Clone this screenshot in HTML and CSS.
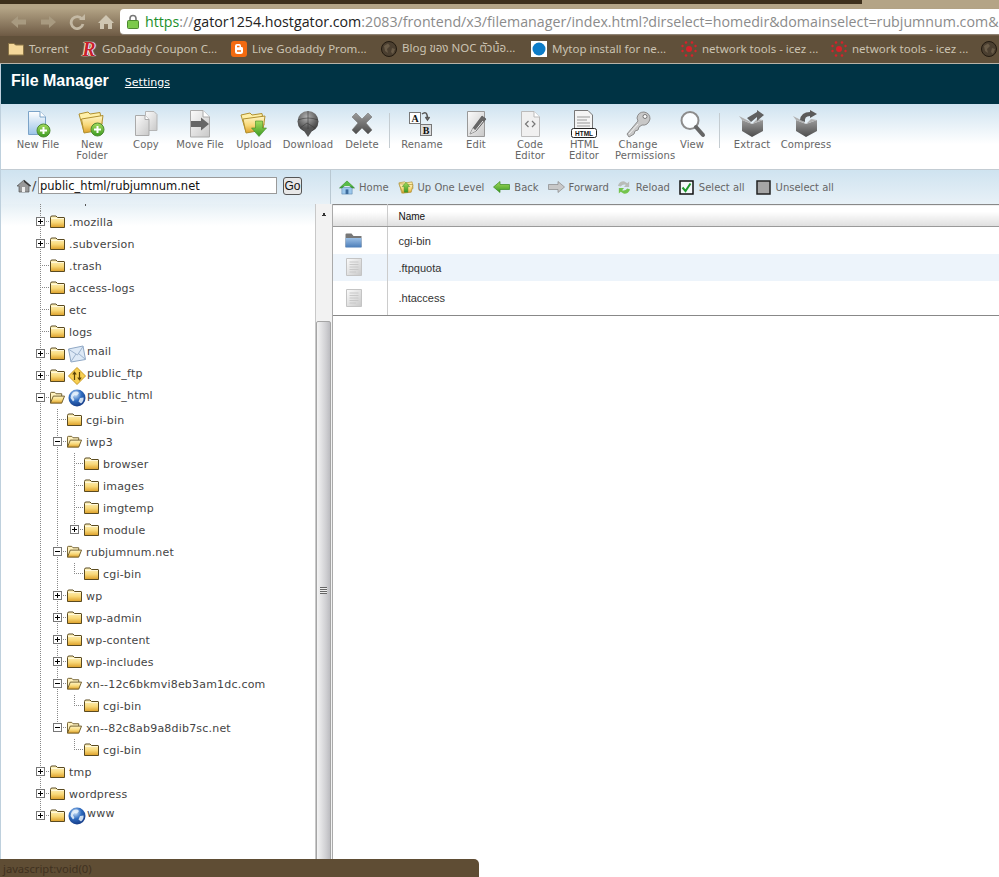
FILE: index.html
```html
<!DOCTYPE html>
<html lang="en">
<head>
<meta charset="utf-8">
<title>File Manager</title>
<link rel="stylesheet" href="styles.css">
</head>
<body>
<svg class="defs" aria-hidden="true">
  <defs>
    <linearGradient id="gFolder" x1="0" y1="0" x2="0" y2="1"><stop offset="0" stop-color="#fff6c8"/><stop offset=".55" stop-color="#f8d878"/><stop offset="1" stop-color="#dc9f28"/></linearGradient>
    <linearGradient id="gPage" x1="0" y1="0" x2="1" y2="1"><stop offset="0" stop-color="#fbfbfb"/><stop offset="1" stop-color="#c8c8c8"/></linearGradient>
    <linearGradient id="gBluePage" x1="0" y1="0" x2="0" y2="1"><stop offset="0" stop-color="#ffffff"/><stop offset="1" stop-color="#9cc4e8"/></linearGradient>
    <linearGradient id="gGray" x1="0" y1="0" x2="0" y2="1"><stop offset="0" stop-color="#9a9a9a"/><stop offset="1" stop-color="#4c4c4c"/></linearGradient>
    <linearGradient id="gGreen" x1="0" y1="0" x2="0" y2="1"><stop offset="0" stop-color="#a6dc5c"/><stop offset="1" stop-color="#3a9a22"/></linearGradient>
    <radialGradient id="gGlobe" cx=".4" cy=".3" r=".8"><stop offset="0" stop-color="#cfe6fb"/><stop offset=".45" stop-color="#2f6cc0"/><stop offset="1" stop-color="#0e2f78"/></radialGradient>
    <radialGradient id="gSphere" cx=".45" cy=".3" r=".8"><stop offset="0" stop-color="#b4b4b4"/><stop offset=".6" stop-color="#5c5c5c"/><stop offset="1" stop-color="#2e2e2e"/></radialGradient>
    <linearGradient id="gBlueFolder" x1="0" y1="0" x2="0" y2="1"><stop offset="0" stop-color="#9cc0e6"/><stop offset="1" stop-color="#4a7cb8"/></linearGradient>

    <symbol id="i-folder" viewBox="0 0 15 13"><path d="M.5 2.500Q.5 1 2 1H6L7.500 2.500H14Q14.500 2.500 14.500 3V12.500H.5Z" fill="url(#gFolder)" stroke="#5a4a20"/><path d="M1 3.500H14" stroke="#fff8d8"/></symbol>
    <symbol id="i-open" viewBox="0 0 16 13"><path d="M.5 12.500V2Q.5 1 1.500 1H5L6.500 2.500H12.500V5" fill="#fff2c0" stroke="#6a5826"/><path d="M.5 12.500L3.500 5H15.500L12.500 12.500Z" fill="url(#gFolder)" stroke="#6a5826"/></symbol>
    <symbol id="i-plus" viewBox="0 0 9 9"><rect x=".5" y=".5" width="8" height="8" fill="#fff" stroke="#777"/><path d="M2 4.500H7M4.500 2V7" stroke="#000"/></symbol>
    <symbol id="i-minus" viewBox="0 0 9 9"><rect x=".5" y=".5" width="8" height="8" fill="#fff" stroke="#777"/><path d="M2 4.500H7" stroke="#000"/></symbol>
    <symbol id="i-globe" viewBox="0 0 18 18"><circle cx="9" cy="9" r="8.500" fill="url(#gGlobe)"/><path d="M5 3.500Q9 1.500 11 4L9 6.500L6.500 6L5 8L6.500 11L5 12.500L2.500 9Q2.500 6 5 3.500ZM12 9L15.500 8.500Q16 12 13 14.500L10.500 12.500Z" fill="#eaf3fc" opacity=".85"/></symbol>
    <symbol id="i-mail" viewBox="0 0 18 17"><path d="M.5 3.500L15 .5L17.500 14L3 16.500Z" fill="#dde9f6" stroke="#8fa7c4"/><path d="M1 4L9.500 9.500L15 1M3 16L8 8.500M17 13.500L10.500 8" fill="none" stroke="#9db3cd"/></symbol>
    <symbol id="i-ftp" viewBox="0 0 18 18"><path d="M9 .5L17.500 9L9 17.500L.5 9Z" fill="#f8cf52" stroke="#c99a20"/><path d="M6.500 13V5.500M4.800 7.500L6.500 5.300L8.200 7.500M11.500 5V12.500M9.800 10.500L11.500 12.700L13.200 10.500" fill="none" stroke="#5a4308" stroke-width="1.200"/></symbol>

    <symbol id="t-newfile" viewBox="0 0 28 28"><path d="M4.500 1.500H16L21.500 7V24.500H4.500Z" fill="url(#gBluePage)" stroke="#7ba3c8"/><path d="M16 1.500V7H21.500" fill="#fff" stroke="#7ba3c8"/><circle cx="19.500" cy="20.500" r="6.500" fill="url(#gGreen)" stroke="#4c8a30"/><path d="M16 20.500H23M19.500 17V24" stroke="#fff" stroke-width="2"/></symbol>
    <symbol id="t-newfolder" viewBox="0 0 28 28"><path d="M1 4L10 2L12 4L22 2.500L24 14L6 22Z" fill="#fff0a8" stroke="#b09030"/><path d="M3.500 9L25 5.500L23 20L6 23Z" fill="url(#gFolder)" stroke="#b09030"/><circle cx="19.500" cy="19.500" r="6.500" fill="url(#gGreen)" stroke="#4c8a30"/><path d="M16 19.500H23M19.500 16V23" stroke="#fff" stroke-width="2"/></symbol>
    <symbol id="t-copy" viewBox="0 0 28 28"><path d="M13.500 1.500H22L25 4.500V20.500H13.500Z" fill="url(#gPage)" stroke="#b5b5b5"/><path d="M3.500 5.500H13L17 9.500V25.500H3.500Z" fill="url(#gPage)" stroke="#aaa"/><path d="M13 5.500V9.500H17" fill="#fff" stroke="#aaa"/></symbol>
    <symbol id="t-move" viewBox="0 0 28 28"><path d="M4.500 .5H17L23.500 7V27H4.500Z" fill="url(#gPage)" stroke="#aaa"/><path d="M17 .5V7H23.500" fill="#fff" stroke="#aaa"/><path d="M5 11H15V7.500L23 14L15 20.500V17H5Z" fill="#666"/></symbol>
    <symbol id="t-upload" viewBox="0 0 28 28"><path d="M1 5L10 3L12 5L22 3.500L24 15L6 22Z" fill="#fff0a8" stroke="#b09030"/><path d="M3 9L25 6L23 20L6 23Z" fill="url(#gFolder)" stroke="#b09030"/><path d="M15.500 11H22.500V18H26.500L19 26.500L11.500 18H15.500Z" fill="url(#gGreen)" stroke="#3c8a26" stroke-width=".6"/></symbol>
    <symbol id="t-download" viewBox="0 0 28 28"><circle cx="14" cy="11.500" r="10.500" fill="url(#gSphere)"/><path d="M8 18H20L14 27Z" fill="#555"/><path d="M4 10Q14 6 24 10M14 1V19M6 18L13 13L21 18" fill="none" stroke="#3a3a3a" opacity=".6"/></symbol>
    <symbol id="t-delete" viewBox="0 0 28 28"><path d="M4 7L8 3L14 9L20 3L24 7L18 13L24 20L20 24L14 18L8 24L4 20L10 13Z" fill="url(#gGray)" stroke="#777" stroke-width=".6"/></symbol>
    <symbol id="t-rename" viewBox="0 0 28 28"><rect x="1.500" y="2.500" width="11" height="11" fill="#fff" stroke="#777"/><text x="7" y="11.500" class="svg-serif">A</text><rect x="12.500" y="14.500" width="11" height="11" fill="#ddd" stroke="#777"/><text x="18" y="23.500" class="svg-serif">B</text><path d="M14 4Q19 0 19.500 8M17.500 7L19.500 10L21.500 7" fill="none" stroke="#555" stroke-width="1.500"/></symbol>
    <symbol id="t-edit" viewBox="0 0 28 28"><path d="M5.500 1.500H22.500V26.500H5.500Z" fill="url(#gPage)" stroke="#999"/><path d="M8 24L11 18L20 6L24 9L14 21Z" fill="#666" stroke="#444" stroke-width=".6"/><path d="M8 24L11 18L14 21Z" fill="#ddd"/><path d="M13 21L21 11" stroke="#eee"/></symbol>
    <symbol id="t-code" viewBox="0 0 28 28"><path d="M5.500 1.500H18L23.500 7V26.500H5.500Z" fill="#f0f0f0" stroke="#bbb"/><path d="M18 1.500V7H23.500" fill="#fff" stroke="#bbb"/><path d="M12.500 11L9.500 14L12.500 17M16 11L19 14L16 17" fill="none" stroke="#777" stroke-width="1.200"/></symbol>
    <symbol id="t-html" viewBox="0 0 28 28"><path d="M4.500 .5H18L22.500 5V20H4.500Z" fill="#f4f4f4" stroke="#777"/><path d="M7 7H20M7 10H17M7 13H20M7 16H20" stroke="#999"/><rect x="1.500" y="18.500" width="25" height="9" rx="2" fill="#fff" stroke="#222"/><text x="14" y="25.800" class="svg-html">HTML</text></symbol>
    <symbol id="t-key" viewBox="0 0 28 28"><path d="M3 24L5 27L10 24L11 21L14 20L15 17L18 15Q24 16 26 9Q26 3 20 2Q14 2 13 8L14 11Z" fill="#c8c8c8" stroke="#8c8c8c"/><circle cx="21" cy="6.500" r="2" fill="#fff" stroke="#777"/><path d="M5 24L14 14" stroke="#f0f0f0"/></symbol>
    <symbol id="t-view" viewBox="0 0 28 28"><circle cx="12" cy="10.500" r="8.500" fill="#fafdff" stroke="#8c8c8c" stroke-width="2"/><path d="M18 17L25 25" stroke="#666" stroke-width="4" stroke-linecap="round"/></symbol>
    <symbol id="t-extract" viewBox="0 0 28 28"><path d="M4 10L14 14L25 10V21L14 27L4 21Z" fill="url(#gGray)"/><path d="M1 6L11 11L14 14L4 10ZM25 10L14 14L19 9Z" fill="#b0b0b0"/><path d="M9 8L19 2V0L26 5L19 11V7L13 12Z" fill="#606060"/></symbol>
    <symbol id="t-compress" viewBox="0 0 28 28"><path d="M4 10L14 14L25 10V21L14 27L4 21Z" fill="url(#gGray)"/><path d="M1 6L11 11L14 14L4 10ZM25 10L14 14L19 9Z" fill="#b0b0b0"/><path d="M8 10Q9 2 18 2V0L25 4L18 8V6Q12 6 13 12Z" fill="#5a5a5a"/></symbol>

    <symbol id="n-home" viewBox="0 0 17 16"><path d="M3 8H14V15H3Z" fill="#9cc8ec" stroke="#5c86ae" stroke-width=".6"/><rect x="7" y="10" width="3" height="5" fill="#3d6c9c"/><path d="M.5 8.500L8.500 1L16.500 8.500L14 8.500L8.500 4L3 8.500Z" fill="#43a83a" stroke="#2f7c2a" stroke-width=".6"/><path d="M8.500 1L14.500 6.500L3 6.500Z" fill="#59bb48"/></symbol>
    <symbol id="n-up" viewBox="0 0 17 16"><path d="M1 3L7 2L8.500 3L15 2L16 9L4 14Z" fill="#fff0a8" stroke="#b09030" stroke-width=".7"/><path d="M1 4L5 14L14 13L16 5Z" fill="url(#gFolder)" stroke="#a88a2c" stroke-width=".7"/><path d="M8.500 2.500L12.500 7H10.500V13H6.500V7H4.500Z" fill="url(#gGreen)" stroke="#3c8a26" stroke-width=".5"/></symbol>
    <symbol id="n-back" viewBox="0 0 17 12"><path d="M.5 6L7 .5V3.500H16.500V8.500H7V11.500Z" fill="url(#gGreen)" stroke="#3a8a20" stroke-width=".7"/></symbol>
    <symbol id="n-fwd" viewBox="0 0 17 12"><path d="M16.500 6L10 .5V3.500H.5V8.500H10V11.500Z" fill="#c8c8c8" stroke="#888" stroke-width=".7"/></symbol>
    <symbol id="n-reload" viewBox="0 0 17 16"><path d="M2 6Q4 1 9 1.500L12 3.500L14 1.500V7.500H8.500L10.500 5Q7 4 5 7Z" fill="#b8bcb8"/><path d="M15 10Q13 15 8 14.500L5 12.500L3 14.500V8.500H8.500L6.500 11Q10 12 12 9Z" fill="#74c44c"/></symbol>
    <symbol id="n-check" viewBox="0 0 15 15"><rect x="1" y="1" width="13" height="13" fill="#f4f8fb" stroke="#111" stroke-width="1.500"/><path d="M3.500 7.500L6.500 11L11.500 3.500" fill="none" stroke="#1f9a2c" stroke-width="2"/></symbol>
    <symbol id="n-uncheck" viewBox="0 0 15 15"><rect x="1" y="1" width="13" height="13" fill="#a5a5a5" stroke="#222" stroke-width="1.500"/></symbol>

    <symbol id="b-folder" viewBox="0 0 16 14"><path d="M.5 13V1.500H6L7.500 3H15.500V13Z" fill="#f4d79a" stroke="#8a7446"/></symbol>
    <symbol id="b-globe" viewBox="0 0 16 16"><circle cx="8" cy="8" r="7.500" fill="#4b3f30" stroke="#221a10"/><path d="M3 5L7 2.500L9 5L6 8L7 12L4 10ZM11 7L14 8L12 13L10 11Z" fill="#6a5c48"/></symbol>
    <symbol id="b-blogger" viewBox="0 0 16 16"><rect width="16" height="16" rx="3" fill="#f26a10"/><path d="M4 5Q4 3 6 3H8.500Q10 3 10 5V6H11Q12 6 12 7.500V10.500Q12 13 9.500 13H6.500Q4 13 4 10.500Z" fill="#fff"/><path d="M6 5.500H8.500M6 10H10" stroke="#f26a10" stroke-width="1.300"/></symbol>
    <symbol id="b-blue" viewBox="0 0 16 16"><rect width="16" height="16" fill="#fff"/><circle cx="8" cy="8" r="6.500" fill="#0c7cc8"/></symbol>
    <symbol id="b-star" viewBox="0 0 16 16"><g fill="#d8202a"><circle cx="8" cy="8" r="3"/><circle cx="5" cy="1.500" r="1.300"/><circle cx="11" cy="1.500" r="1.300"/><circle cx="1.500" cy="5" r="1.200"/><circle cx="14.500" cy="5" r="1.200"/><circle cx="1.500" cy="10" r="1.200"/><circle cx="14.500" cy="10" r="1.200"/><circle cx="5" cy="14.500" r="1.300"/><circle cx="11" cy="14.500" r="1.300"/></g></symbol>
  </defs>
</svg>

<header class="browser">
  <div class="tabstrip"></div>
  <div class="omnirow">
    <nav class="browser-nav">
      <svg class="bn" viewBox="0 0 18 16"><path d="M1 8L8 2V5.500H16V10.500H8V14Z" fill="#a89a80"/></svg>
      <svg class="bn" viewBox="0 0 18 16"><path d="M17 8L10 2V5.500H2V10.500H10V14Z" fill="#a89a80"/></svg>
      <svg class="bn" viewBox="0 0 18 16"><path d="M14 5A6 6 0 1 0 15 10" fill="none" stroke="#c4b9a4" stroke-width="2.800"/><path d="M11 6H17V0Z" fill="#c4b9a4"/></svg>
      <svg class="bn" viewBox="0 0 18 16"><path d="M1 9L9 1L17 9H15V15H11V10H7V15H3V9Z" fill="#cfc6b2"/></svg>
    </nav>
    <div class="omnibox">
      <svg class="lock" viewBox="0 0 12 15"><path d="M3 7V4.500Q3 1.500 6 1.500T9 4.500V7" fill="none" stroke="#777" stroke-width="1.600"/><rect x=".5" y="6.500" width="11" height="8" rx="1" fill="#7cc94c" stroke="#4c8a30"/></svg>
      <span class="url"><span class="url-https">https</span><span class="url-rest">://</span><span class="url-host">gator1254.hostgator.com</span><span class="url-rest">:2083/frontend/x3/filemanager/index.html?dirselect=homedir&amp;domainselect=rubjumnum.com&amp;</span></span>
    </div>
  </div>
  <div class="bookmarks">
    <a class="bm bm-first"><svg class="bm-icon"><use href="#b-folder"/></svg>Torrent</a>
    <a class="bm"><span class="bm-r">R</span>GoDaddy Coupon C...</a>
    <a class="bm"><svg class="bm-icon"><use href="#b-blogger"/></svg>Live Godaddy Prom...</a>
    <a class="bm"><svg class="bm-icon"><use href="#b-globe"/></svg>Blog ของ NOC ตัวน้อ...</a>
    <a class="bm"><svg class="bm-icon"><use href="#b-blue"/></svg>Mytop install for ne...</a>
    <a class="bm"><svg class="bm-icon"><use href="#b-star"/></svg>network tools - icez ...</a>
    <a class="bm"><svg class="bm-icon"><use href="#b-star"/></svg>network tools - icez ...</a>
    <a class="bm"><svg class="bm-icon"><use href="#b-globe"/></svg></a>
  </div>
</header>

<div class="app">
  <div class="titlebar"><h1>File Manager</h1><a class="settings">Settings</a></div>

  <div class="toolbar">
    <a class="tool"><svg><use href="#t-newfile"/></svg><span>New File</span></a>
    <a class="tool"><svg><use href="#t-newfolder"/></svg><span>New Folder</span></a>
    <a class="tool"><svg><use href="#t-copy"/></svg><span>Copy</span></a>
    <a class="tool"><svg><use href="#t-move"/></svg><span>Move File</span></a>
    <a class="tool"><svg><use href="#t-upload"/></svg><span>Upload</span></a>
    <a class="tool"><svg><use href="#t-download"/></svg><span>Download</span></a>
    <a class="tool"><svg><use href="#t-delete"/></svg><span>Delete</span></a>
    <i class="tool-sep"></i>
    <a class="tool"><svg><use href="#t-rename"/></svg><span>Rename</span></a>
    <a class="tool"><svg><use href="#t-edit"/></svg><span>Edit</span></a>
    <a class="tool"><svg><use href="#t-code"/></svg><span>Code Editor</span></a>
    <a class="tool"><svg><use href="#t-html"/></svg><span>HTML Editor</span></a>
    <a class="tool tool-wide"><svg><use href="#t-key"/></svg><span>Change Permissions</span></a>
    <a class="tool"><svg><use href="#t-view"/></svg><span>View</span></a>
    <i class="tool-sep"></i>
    <a class="tool"><svg><use href="#t-extract"/></svg><span>Extract</span></a>
    <a class="tool"><svg><use href="#t-compress"/></svg><span>Compress</span></a>
  </div>

  <div class="addrbar">
    <div class="pathbox">
      <svg class="path-home" viewBox="0 0 16 14"><path d="M1 7L8 1L15 7L13 7V13H3V7Z" fill="#999" stroke="#555" stroke-width=".7"/><path d="M8 1L15 7H13L8 3Z" fill="#333"/><rect x="6" y="8" width="3" height="5" fill="#eee"/></svg>
      <span class="slash">/</span>
      <input class="path-input" type="text" value="public_html/rubjumnum.net">
      <button class="go">Go</button>
    </div>
    <nav class="navbtns">
      <a class="nav"><svg class="nv16"><use href="#n-home"/></svg>Home</a>
      <a class="nav"><svg class="nv16"><use href="#n-up"/></svg>Up One Level</a>
      <a class="nav"><svg class="nv-arrow"><use href="#n-back"/></svg>Back</a>
      <a class="nav nav-fwd"><svg class="nv-arrow"><use href="#n-fwd"/></svg>Forward</a>
      <a class="nav"><svg class="nv16"><use href="#n-reload"/></svg>Reload</a>
      <a class="nav nav-sel"><svg class="nv-check"><use href="#n-check"/></svg>Select all</a>
      <a class="nav"><svg class="nv-check"><use href="#n-uncheck"/></svg>Unselect all</a>
    </nav>
  </div>

  <main class="panes">
    <section class="tree">
      <div class="row-stub"><i class="c c-line"></i></div>
      <div class="row"><i class="c c-tee"><svg class="box"><use href="#i-plus"/></svg></i><svg class="fd"><use href="#i-folder"/></svg><span>.mozilla</span></div>
      <div class="row"><i class="c c-tee"><svg class="box"><use href="#i-plus"/></svg></i><svg class="fd"><use href="#i-folder"/></svg><span>.subversion</span></div>
      <div class="row"><i class="c c-tee"></i><svg class="fd"><use href="#i-folder"/></svg><span>.trash</span></div>
      <div class="row"><i class="c c-tee"></i><svg class="fd"><use href="#i-folder"/></svg><span>access-logs</span></div>
      <div class="row"><i class="c c-tee"></i><svg class="fd"><use href="#i-folder"/></svg><span>etc</span></div>
      <div class="row"><i class="c c-tee"></i><svg class="fd"><use href="#i-folder"/></svg><span>logs</span></div>
      <div class="row"><i class="c c-tee"><svg class="box"><use href="#i-plus"/></svg></i><svg class="fd"><use href="#i-folder"/></svg><svg class="sp"><use href="#i-mail"/></svg><span class="up">mail</span></div>
      <div class="row"><i class="c c-tee"><svg class="box"><use href="#i-plus"/></svg></i><svg class="fd"><use href="#i-folder"/></svg><svg class="sp"><use href="#i-ftp"/></svg><span class="up">public_ftp</span></div>
      <div class="row"><i class="c c-tee"><svg class="box"><use href="#i-minus"/></svg></i><svg class="fd"><use href="#i-open"/></svg><svg class="sp"><use href="#i-globe"/></svg><span class="up">public_html</span></div>

      <div class="row"><i class="c c-line"></i><i class="c c-tee"></i><svg class="fd"><use href="#i-folder"/></svg><span>cgi-bin</span></div>
      <div class="row"><i class="c c-line"></i><i class="c c-tee"><svg class="box"><use href="#i-minus"/></svg></i><svg class="fd"><use href="#i-open"/></svg><span>iwp3</span></div>
      <div class="row"><i class="c c-line"></i><i class="c c-line"></i><i class="c c-tee"></i><svg class="fd"><use href="#i-folder"/></svg><span>browser</span></div>
      <div class="row"><i class="c c-line"></i><i class="c c-line"></i><i class="c c-tee"></i><svg class="fd"><use href="#i-folder"/></svg><span>images</span></div>
      <div class="row"><i class="c c-line"></i><i class="c c-line"></i><i class="c c-tee"></i><svg class="fd"><use href="#i-folder"/></svg><span>imgtemp</span></div>
      <div class="row"><i class="c c-line"></i><i class="c c-line"></i><i class="c c-ell"><svg class="box"><use href="#i-plus"/></svg></i><svg class="fd"><use href="#i-folder"/></svg><span>module</span></div>
      <div class="row"><i class="c c-line"></i><i class="c c-tee"><svg class="box"><use href="#i-minus"/></svg></i><svg class="fd"><use href="#i-open"/></svg><span>rubjumnum.net</span></div>
      <div class="row"><i class="c c-line"></i><i class="c c-line"></i><i class="c c-ell"></i><svg class="fd"><use href="#i-folder"/></svg><span>cgi-bin</span></div>
      <div class="row"><i class="c c-line"></i><i class="c c-tee"><svg class="box"><use href="#i-plus"/></svg></i><svg class="fd"><use href="#i-folder"/></svg><span>wp</span></div>
      <div class="row"><i class="c c-line"></i><i class="c c-tee"><svg class="box"><use href="#i-plus"/></svg></i><svg class="fd"><use href="#i-folder"/></svg><span>wp-admin</span></div>
      <div class="row"><i class="c c-line"></i><i class="c c-tee"><svg class="box"><use href="#i-plus"/></svg></i><svg class="fd"><use href="#i-folder"/></svg><span>wp-content</span></div>
      <div class="row"><i class="c c-line"></i><i class="c c-tee"><svg class="box"><use href="#i-plus"/></svg></i><svg class="fd"><use href="#i-folder"/></svg><span>wp-includes</span></div>
      <div class="row"><i class="c c-line"></i><i class="c c-tee"><svg class="box"><use href="#i-minus"/></svg></i><svg class="fd"><use href="#i-open"/></svg><span>xn--12c6bkmvi8eb3am1dc.com</span></div>
      <div class="row"><i class="c c-line"></i><i class="c c-line"></i><i class="c c-ell"></i><svg class="fd"><use href="#i-folder"/></svg><span>cgi-bin</span></div>
      <div class="row"><i class="c c-line"></i><i class="c c-ell"><svg class="box"><use href="#i-minus"/></svg></i><svg class="fd"><use href="#i-open"/></svg><span>xn--82c8ab9a8dib7sc.net</span></div>
      <div class="row"><i class="c c-line"></i><i class="c"></i><i class="c c-ell"></i><svg class="fd"><use href="#i-folder"/></svg><span>cgi-bin</span></div>

      <div class="row"><i class="c c-tee"><svg class="box"><use href="#i-plus"/></svg></i><svg class="fd"><use href="#i-folder"/></svg><span>tmp</span></div>
      <div class="row"><i class="c c-tee"><svg class="box"><use href="#i-plus"/></svg></i><svg class="fd"><use href="#i-folder"/></svg><span>wordpress</span></div>
      <div class="row"><i class="c c-ell"><svg class="box"><use href="#i-plus"/></svg></i><svg class="fd"><use href="#i-folder"/></svg><svg class="sp"><use href="#i-globe"/></svg><span class="up">www</span></div>
    </section>

    <div class="scrollbar">
      <div class="sb-up"></div>
      <div class="sb-space"></div>
      <div class="sb-thumb"><i class="grip"></i></div>
    </div>

    <section class="files">
      <table>
        <thead><tr><th class="col-ico"></th><th>Name</th></tr></thead>
        <tbody>
          <tr><td class="col-ico"><svg class="fi fi-folder" viewBox="0 0 17 15"><path d="M.5 14V1.500Q.5 .5 1.500 .5H6.500L8.500 3H16.500V14Z" fill="#777"/><path d="M.5 14.500V5H16.500V14.500Z" fill="url(#gBlueFolder)"/></svg></td><td>cgi-bin</td></tr>
          <tr class="alt"><td class="col-ico"><svg class="fi fi-doc" viewBox="0 0 16 18"><path d="M.5 .5H15.500V17.500H.5Z" fill="url(#gPage)" stroke="#c4c4c4"/><path d="M3.500 4H12.500M3.500 6.500H12.500M3.500 9H12.500M3.500 11.500H12.500M3.500 14H10" stroke="#c8c8c8"/></svg></td><td>.ftpquota</td></tr>
          <tr class="tall"><td class="col-ico"><svg class="fi fi-doc" viewBox="0 0 16 18"><path d="M.5 .5H15.500V17.500H.5Z" fill="url(#gPage)" stroke="#c4c4c4"/><path d="M3.500 4H12.500M3.500 6.500H12.500M3.500 9H12.500M3.500 11.500H12.500M3.500 14H10" stroke="#c8c8c8"/></svg></td><td>.htaccess</td></tr>
        </tbody>
      </table>
    </section>
  </main>
</div>

<div class="statusbubble">javascript:void(0)</div>
</body>
</html>
```
FILE: styles.css
```css
* { box-sizing: border-box; }
html, body { margin: 0; height: 877px; overflow: hidden; }
body { width: 999px; display: flex; flex-direction: column; position: relative; background: #fff; font-family: "DejaVu Sans", Verdana, sans-serif; }
.defs { display: block; width: 0; height: 0; overflow: hidden; }
svg { display: block; flex: none; }
a { color: inherit; text-decoration: none; }
i { font-style: normal; }

/* browser chrome */
.browser { flex: none; height: 64px; display: flex; flex-direction: column; }
.tabstrip { height: 8px; flex: none; background: linear-gradient(#b4a486, #b4a486) right top / 137px 4px no-repeat, linear-gradient(#3d2f1b 0 4px, #b4a486 4px 8px); }
.omnirow { height: 28px; flex: none; display: flex; align-items: flex-start; background: linear-gradient(#b4a486, #6e5a44); }
.browser-nav { display: flex; width: 120px; height: 27px; align-items: center; gap: 11px; padding-left: 10px; }
.bn { width: 18px; height: 16px; }
.omnibox { flex: 1; height: 26px; margin-top: 1px; background: #fff; border-radius: 4px 0 0 4px; display: flex; align-items: center; padding-left: 7px; overflow: hidden; border-bottom: 1px solid #8d8375; }
.lock { width: 12px; height: 15px; margin-right: 6px; }
.url { font: 14.230px "Open Sans", "Noto Sans", sans-serif; white-space: nowrap; }
.url-https { color: #1c8f2c; }
.url-rest { color: #8b8b8b; }
.url-host { color: #222; }
.bookmarks { flex: none; height: 28px; display: flex; align-items: center; padding: 0 0 2px 8px; background: #60503a; border-bottom: 1px solid #b8b3a8; color: #cbc3b2; font: 11.500px "Noto Sans", "Open Sans", "Noto Sans Thai", sans-serif; overflow: hidden; }
.bm { flex: none; width: 150px; display: flex; align-items: center; white-space: nowrap; gap: 5px; }
.bm-first { width: 73px; }
.bm-icon { width: 16px; height: 16px; }
.bm-r { width: 16px; height: 16px; font: italic bold 20px/16px "Liberation Serif", serif; color: #c8202a; text-align: center; text-shadow: 0 0 1px #fff, 1px 0 1px #fff, -1px 0 1px #fff; }

/* cPanel app */
.app { flex: 1; min-height: 0; display: flex; flex-direction: column; border-left: 1px solid #bed0dd; }
.titlebar { flex: none; height: 40px; background: #003344; display: flex; align-items: center; padding: 0 0 6px 10px; color: #fff; }
.titlebar h1 { margin: 0 16px 0 0; font: bold 16px "Liberation Sans", Arial, sans-serif; }
.settings { font-size: 11px; text-decoration: underline; margin-top: 3px; }

.toolbar { flex: none; height: 66px; display: flex; padding: 6px 0 0 10px; background: linear-gradient(#cfe3f0, #fff 62%); border-bottom: 1px solid #c3ccd3; color: #666; font-size: 10px; line-height: 11px; }
.tool { width: 54px; flex: none; display: flex; flex-direction: column; align-items: center; text-align: center; }
.tool svg { width: 28px; height: 28px; margin-bottom: 1px; }
.tool span { display: block; padding: 0 2px; letter-spacing: .1px; }
.tool-wide span { width: 54px; padding: 0 4px; }
.tool-sep { width: 6px; flex: none; height: 35px; margin-top: 3px; background: linear-gradient(#c4ccd1, #c4ccd1) 0 0 / 1px 100% no-repeat; }

.addrbar { flex: none; height: 34px; display: flex; background: linear-gradient(#cfe3f0, #e8f1f7); color: #666; font-size: 10px; }
.pathbox { width: 330px; flex: none; display: flex; align-items: center; padding: 0 0 3px 15px; border-right: 1px solid #b9c8d2; }
.path-home { width: 16px; height: 14px; }
.slash { width: 6px; font-size: 13px; color: #444; }
.path-input { width: 239px; height: 17px; padding: 0 1px; border: 1px solid #9a9a9a; background: #fff; color: #111; font: 11.500px "DejaVu Sans", Verdana, sans-serif; }
.go { width: 19px; height: 18px; margin-left: 6px; padding: 0; border: 1px solid #555; border-radius: 3px; background: #e8e8e8; color: #111; font: 12px "Liberation Sans", Arial, sans-serif; }
.navbtns { display: flex; align-items: center; padding-left: 8px; }
.nav { display: flex; align-items: center; gap: 4px; margin-right: 9px; white-space: nowrap; }
.nav-fwd { margin-right: 7px; }
.nav-sel { margin-right: 11px; }
.nv16 { width: 16px; height: 15px; }
.nv-arrow { width: 17px; height: 12px; }
.nv-check { width: 15px; height: 15px; margin-right: 1px; }

/* panes */
.panes { flex: 1; min-height: 0; display: flex; }
.tree { width: 315px; flex: none; padding-left: 32px; background: linear-gradient(#e6f0f6, #fff 22px); border-right: 1px solid #c8c8c8; color: #444; font-size: 11px; letter-spacing: .2px; overflow: hidden; }
.row-stub { height: 7px; display: flex; background: linear-gradient(#555, #555) 52px 0 / 1px 2px no-repeat; }
.row { height: 22px; display: flex; align-items: center; }
.row > span { margin-left: 4px; white-space: nowrap; }
.row > span.up { margin-left: 1px; margin-bottom: 6px; }
.row-stub .c { height: 7px; }
.c { width: 17px; height: 22px; flex: none; display: flex; justify-content: flex-start; align-items: center; padding-left: 3px; }
.c-line { background: repeating-linear-gradient(#888 0 1px, transparent 1px 2px) 7px 0 / 1px 100% no-repeat; }
.c-tee { background: repeating-linear-gradient(#888 0 1px, transparent 1px 2px) 7px 0 / 1px 100% no-repeat, repeating-linear-gradient(90deg, #888 0 1px, transparent 1px 2px) 7px 10px / 10px 1px no-repeat; }
.c-ell { background: repeating-linear-gradient(#888 0 1px, transparent 1px 2px) 7px 0 / 1px 11px no-repeat, repeating-linear-gradient(90deg, #888 0 1px, transparent 1px 2px) 7px 10px / 10px 1px no-repeat; }
.box { width: 9px; height: 9px; margin-bottom: 2px; }
.fd { width: 15px; height: 13px; margin-bottom: 2px; }
.row .sp { width: 18px; height: 18px; margin: 0 0 0 3px; }

.scrollbar { width: 16px; flex: none; display: flex; flex-direction: column; background: #f2f2f2; }
.sb-up { height: 17px; flex: none; background: conic-gradient(from 150deg at 50% 50%, #333 0 60deg, transparent 60deg) 4px 4px / 8px 8px no-repeat; }
.sb-space { height: 100px; flex: none; }
.sb-thumb { flex: 1; display: flex; align-items: flex-start; justify-content: center; padding-top: 265px; border: 1px solid #a5a5a5; border-top-left-radius: 2px; border-top-right-radius: 2px; margin-right: 1px; background: linear-gradient(90deg, #f4f4f4, #cfcfd2 70%, #bcbcc0); }
.grip { display: block; width: 7px; height: 7px; background: repeating-linear-gradient(#666 0 1px, #eee 1px 2px); }

.files { flex: 1; min-width: 0; border-left: 1px solid #aaa; }
table { width: 100%; table-layout: fixed; border-collapse: collapse; font: 10px "Liberation Sans", Arial, sans-serif; color: #333; }
th { height: 22px; padding: 2px 0 0 11px; font-weight: normal; text-align: left; color: #111; background: linear-gradient(#fff 30%, #dedede); border-top: 1px solid #888; border-bottom: 1px solid #999; }
td { height: 27px; padding: 2px 0 0 11px; font-size: 11px; }
.col-ico { width: 54px; padding: 0; border-right: 1px solid #ccc; }
.alt td { background: #edf4fb; }
.tall td { height: 35px; padding-top: 0; border-bottom: 1px solid #888; }
.fi-folder { width: 17px; height: 15px; margin-left: 12px; }
.fi-doc { width: 16px; height: 18px; margin-left: 13px; }

.statusbubble { position: absolute; left: 0; bottom: 0; width: 479px; height: 18px; padding: 2px 0 0 3px; background: #5f4d34; border-top-right-radius: 5px; color: #3f3120; font: 11.200px/16px "Noto Sans", sans-serif; }

.svg-serif { font: bold 10px "Liberation Serif", serif; text-anchor: middle; fill: #111; }
.svg-html { font: bold 6.500px "Liberation Sans", sans-serif; text-anchor: middle; fill: #111; }
```
